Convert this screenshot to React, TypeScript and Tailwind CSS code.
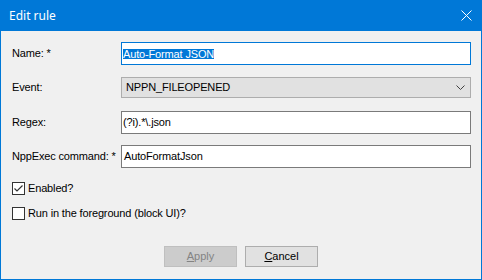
import React from "react";

const ui = { fontFamily: '"Liberation Sans", Arial, sans-serif' };

function Checkbox({ checked }: { checked: boolean }) {
  return (
    <svg width="13" height="13" viewBox="0 0 13 13" className="shrink-0">
      <rect x="0.5" y="0.5" width="12" height="12" fill="#ffffff" stroke="#333333" />
      {checked && (
        <polyline points="2.5,6.5 5,9 10.5,3.5" fill="none" stroke="#333333" strokeWidth="1.2" />
      )}
    </svg>
  );
}

function Row({ label, children, className }: { label: string; children: React.ReactNode; className: string }) {
  return (
    <div className={`flex items-center ${className}`}>
      <div className="w-[120px] shrink-0 pl-[11px] text-[11px] tracking-[-0.15px] text-black whitespace-nowrap">{label}</div>
      {children}
    </div>
  );
}

export default function App() {
  return (
    <div className="w-[482px] h-[280px] flex flex-col bg-[#0078d7]" style={ui}>
      <div className="h-[31px] shrink-0 flex items-center justify-between pl-[9px] pr-[10px]">
        <span className="text-white text-[12px] leading-none" style={{ fontFamily: '"Noto Sans", "Open Sans", sans-serif' }}>
          Edit rule
        </span>
        <svg width="11" height="11" viewBox="0 0 11 11">
          <path d="M0.5 0.5 L10.5 10.5 M10.5 0.5 L0.5 10.5" stroke="#ffffff" strokeWidth="1" fill="none" />
        </svg>
      </div>
      <div className="flex-1 mx-[1px] mb-[1px] bg-[#f0f0f0] flex flex-col pr-[10px]">
        <Row label="Name: *" className="mt-[11px]">
          <div className="flex-1 h-[23px] border border-[#0078d7] bg-white flex items-center pl-[1px]">
            <span className="bg-[#0078d7] text-white text-[11px] tracking-[-0.15px] leading-[10px] h-[10px] flex items-center px-0">Auto-Format JSON</span>
          </div>
        </Row>
        <Row label="Event:" className="mt-[12px]">
          <div className="flex-1 h-[21px] border border-[#adadad] bg-[#e1e1e1] flex items-center justify-between pl-[4px] pr-[5px]">
            <span className="text-[11px] tracking-[-0.15px] text-black">NPPN_FILEOPENED</span>
            <svg width="9" height="5" viewBox="0 0 9 5">
              <polyline points="0.5,0.5 4.5,4.5 8.5,0.5" fill="none" stroke="#404040" strokeWidth="1" />
            </svg>
          </div>
        </Row>
        <Row label="Regex:" className="mt-[13px]">
          <div className="flex-1 h-[23px] border border-[#7a7a7a] bg-white flex items-center pl-[1px] text-[11px] tracking-[-0.15px] text-black">
            (?i).*\.json
          </div>
        </Row>
        <Row label="NppExec command: *" className="mt-[11px]">
          <div className="flex-1 h-[23px] border border-[#7a7a7a] bg-white flex items-center pl-[2px] text-[11px] tracking-[-0.15px] text-black">
            AutoFormatJson
          </div>
        </Row>
        <div className="flex items-center mt-[14px] ml-[11px] gap-[3px] text-[11px] tracking-[-0.15px] leading-[13px] text-black">
          <Checkbox checked />
          <span>Enabled?</span>
        </div>
        <div className="flex items-center mt-[12px] ml-[11px] gap-[3px] text-[11px] tracking-[-0.15px] leading-[13px] text-black">
          <Checkbox checked={false} />
          <span>Run in the foreground (block UI)?</span>
        </div>
        <div className="flex gap-[8px] mt-[26px] ml-[163px]">
          <div className="w-[73px] h-[21px] border border-[#bfbfbf] bg-[#cccccc] flex items-center justify-center text-[11px] text-[#838383]">
            <span><span className="underline">A</span>pply</span>
          </div>
          <div className="w-[73px] h-[21px] border border-[#adadad] bg-[#e1e1e1] flex items-center justify-center text-[11px] text-black">
            <span><span className="underline">C</span>ancel</span>
          </div>
        </div>
      </div>
    </div>
  );
}
